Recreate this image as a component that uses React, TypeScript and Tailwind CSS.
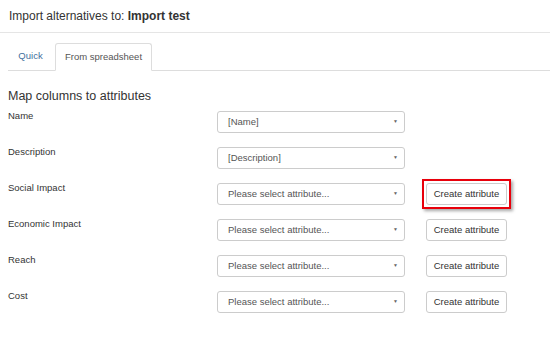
import React from "react";

const rows: { label: string; value: string; button: boolean; highlight?: boolean }[] = [
  { label: "Name", value: "[Name]", button: false },
  { label: "Description", value: "[Description]", button: false },
  { label: "Social Impact", value: "Please select attribute...", button: true, highlight: true },
  { label: "Economic Impact", value: "Please select attribute...", button: true },
  { label: "Reach", value: "Please select attribute...", button: true },
  { label: "Cost", value: "Please select attribute...", button: true },
];

function Select({ value }: { value: string }) {
  return (
    <div className="flex h-[22px] w-[188px] items-center justify-between rounded-[3px] border border-[#ccc] bg-white pl-[10px] pr-[6px] text-[9.5px] text-[#555]">
      <span>{value}</span>
      <span className="text-[5px] text-[#666]">▼</span>
    </div>
  );
}

function Button() {
  return (
    <div className="flex h-[22px] w-[81px] items-center justify-center rounded-[3px] border border-[#ccc] bg-white text-[9.5px] text-[#333]">
      Create attribute
    </div>
  );
}

export default function App() {
  return (
    <div
      className="h-[341px] w-[550px] overflow-hidden bg-white text-[#333]"
      style={{ fontFamily: '"Liberation Sans", Arial, sans-serif' }}
    >
      <div className="flex h-[33px] items-center border-b border-[#e5e5e5] pl-[9px] pb-[1px] text-[12px]">
        <span>
          Import alternatives to: <b className="font-bold">Import test</b>
        </span>
      </div>
      <div className="pl-[8px]">
        <div className="mt-[10px] flex h-[28px] items-end border-b border-[#ddd] text-[9.5px]">
          <div className="mr-[2px] flex h-[27px] w-[45px] items-center justify-center text-[#3f6f9e]">Quick</div>
          <div className="-mb-px flex h-[28px] w-[97px] items-center justify-center rounded-t-[3px] border border-b-white border-[#ddd] bg-white text-[#555]">
            From spreadsheet
          </div>
        </div>
        <div className="mt-[15px] h-[20px] text-[12.5px] leading-[20px]">Map columns to attributes</div>
        <div className="flex flex-col">
          {rows.map((r) => (
            <div key={r.label} className="flex h-[36px] items-start">
              <div className="w-[209px] text-[9.5px] leading-[20px]">{r.label}</div>
              <div className="mt-[5px] flex items-center">
                <Select value={r.value} />
                {r.button && (
                  <div className="relative ml-[21px]">
                    <Button />
                    {r.highlight && (
                      <div className="pointer-events-none absolute left-[-4px] right-[-4px] top-[-4px] bottom-[-4px] border-[2px] border-[#e8000b] shadow-[2px_2px_3px_rgba(0,0,0,0.35)]" />
                    )}
                  </div>
                )}
              </div>
            </div>
          ))}
        </div>
      </div>
    </div>
  );
}
